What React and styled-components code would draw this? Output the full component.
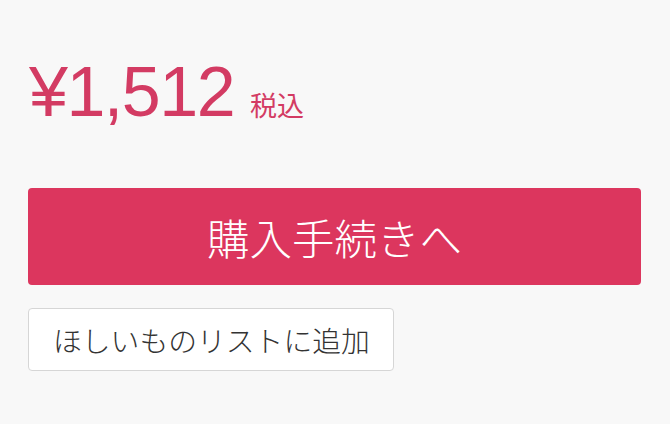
import React from "react";
import styled, { createGlobalStyle } from "styled-components";

const GlobalStyle = createGlobalStyle`
  html, body {
    margin: 0;
    padding: 0;
    background: #f8f8f8;
  }
  body {
    font-family: "Liberation Sans", "Noto Sans CJK JP", sans-serif;
  }
`;

const Page = styled.div`
  width: 670px;
  height: 424px;
  box-sizing: border-box;
  padding: 52px 29px 0 28px;
  display: flex;
  flex-direction: column;
  background: #f8f8f8;
`;

const PriceRow = styled.div`
  display: flex;
  align-items: baseline;
  gap: 16px;
  color: #d33b63;
  .amount {
    font-size: 70px;
    line-height: 80px;
    letter-spacing: -1.5px;
    padding-left: 1px;
  }
  .tax {
    font-family: "Noto Sans CJK JP", sans-serif;
    font-size: 27px;
  }
`;

const BuyButton = styled.button`
  margin-top: 56px;
  height: 97px;
  width: 100%;
  border: none;
  border-radius: 4px;
  background: #dc365e;
  color: #fff;
  font-family: "Noto Sans CJK JP", sans-serif;
  font-weight: 300;
  font-size: 42.5px;
  display: flex;
  align-items: center;
  justify-content: center;
  padding: 0;
`;

const WishButton = styled.button`
  margin-top: 23px;
  align-self: flex-start;
  height: 63px;
  box-sizing: border-box;
  padding: 0 23px 0 24px;
  border: 1px solid #d6d6d6;
  border-radius: 4px;
  background: #fff;
  color: #333;
  font-family: "Noto Sans CJK JP", sans-serif;
  font-weight: 300;
  font-size: 28.8px;
  display: flex;
  align-items: center;
`;

export default function App() {
  return (
    <>
      <GlobalStyle />
      <Page>
        <PriceRow>
          <span className="amount">¥1,512</span>
          <span className="tax">税込</span>
        </PriceRow>
        <BuyButton>購入手続きへ</BuyButton>
        <WishButton>ほしいものリストに追加</WishButton>
      </Page>
    </>
  );
}
